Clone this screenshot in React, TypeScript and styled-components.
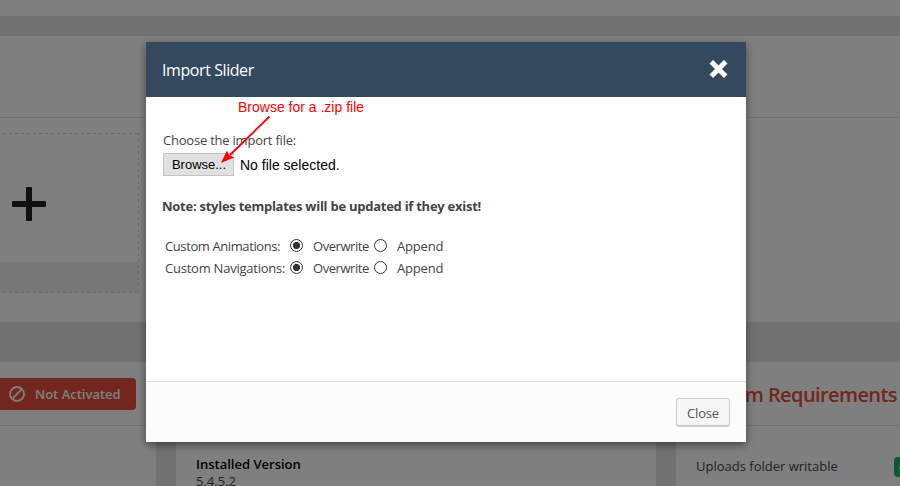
import React from "react";
import styled, { createGlobalStyle } from "styled-components";

const Global = createGlobalStyle`
  * { box-sizing: border-box; }
  html, body { margin: 0; padding: 0; overflow: hidden; }
  body { font-family: "Open Sans", sans-serif; font-size: 13px; color: #444; background: #e2e2e2; }
`;

const Page = styled.div`
  position: relative;
  width: 900px;
  height: 486px;
  overflow: hidden;
  display: flex;
  flex-direction: column;
  background: #e2e2e2;
`;

const TopStrip = styled.div`
  flex: none;
  height: 16px;
  margin-bottom: 20px;
  background: #fff;
`;

const SlidersPanel = styled.section`
  flex: none;
  height: 286px;
  margin-bottom: 40px;
  background: #fff;
`;

const SlidersHead = styled.div`
  height: 82px;
  border-bottom: 1px solid #e2e2e2;
`;

const NewSlider = styled.div`
  display: flex;
  flex-direction: column;
  width: 220px;
  height: 160px;
  margin: 15px 0 0 -81px;
  padding: 1px;
  background:
    repeating-linear-gradient(90deg, #d4d4d4 0 3px, transparent 3px 6px) 0 0 / 100% 1px no-repeat,
    repeating-linear-gradient(90deg, #d4d4d4 0 3px, transparent 3px 6px) 0 100% / 100% 1px no-repeat,
    repeating-linear-gradient(180deg, #d4d4d4 0 3px, transparent 3px 6px) 100% 0 / 1px 100% no-repeat;
`;

const NewSliderIcon = styled.div`
  flex: 1;
  padding: 53px 0 0 92px;
  svg { display: block; }
`;

const NewSliderFoot = styled.div`
  height: 30px;
  background: #eee;
`;

const Columns = styled.div`
  flex: 1;
  display: grid;
  grid-template-columns: 156px 480px 224px;
  column-gap: 20px;
`;

const Column = styled.section`
  background: #fff;
  min-width: 0;
`;

const ColumnHead = styled.div<{ $inset?: number }>`
  height: 64px;
  padding-left: ${(p) => p.$inset ?? 0}px;
  border-bottom: 1px solid #e2e2e2;
  display: flex;
  align-items: center;
  overflow: hidden;
`;

const Heading = styled.h2`
  margin: 2px 0 0;
  font-size: 20px;
  line-height: 28px;
  font-weight: 600;
  letter-spacing: -0.6px;
  color: #e74c3c;
  white-space: nowrap;
`;

const StatusBadge = styled.div`
  display: flex;
  align-items: center;
  gap: 10px;
  width: 136px;
  height: 32px;
  padding-left: 9px;
  border-radius: 0 4px 4px 0;
  background: #e74c3c;
  color: #fff;
  font-weight: 600;
  white-space: nowrap;
`;

const VersionInfo = styled.div`
  padding: 29px 0 0 20px;
  line-height: 17px;
`;

const VersionLabel = styled.div`
  font-weight: 600;
  line-height: 18px;
  color: #000;
`;

const Requirement = styled.div`
  display: flex;
  justify-content: space-between;
  align-items: flex-start;
  height: 20px;
  margin: 31px 0 0 20px;
  line-height: 18px;
`;

const OkMark = styled.span`
  display: flex;
  align-items: center;
  width: 6px;
  height: 20px;
  padding-left: 5px;
  border-radius: 4px 0 0 4px;
  background: #27ae60;
  overflow: hidden;
  svg { flex: none; }
`;

const Overlay = styled.div`
  position: absolute;
  inset: 0;
  display: flex;
  justify-content: center;
  align-items: flex-start;
  padding: 42px 8px 0 0;
  background: rgba(0, 0, 0, 0.5);
`;

const Dialog = styled.div`
  position: relative;
  display: flex;
  flex-direction: column;
  width: 600px;
  height: 400px;
  background: #fff;
  box-shadow: 0 3px 8px rgba(0, 0, 0, 0.45);
`;

const DialogHeader = styled.header`
  display: flex;
  justify-content: space-between;
  align-items: center;
  height: 55px;
  padding: 0 18px 0 16px;
  background: #34495e;
  color: #fff;
  font-size: 16px;
`;

const Title = styled.span`
  line-height: 22px;
  letter-spacing: -0.42px;
`;

const CloseIcon = styled.button`
  padding: 0;
  margin-top: -1px;
  border: 0;
  background: none;
  svg { display: block; }
`;

const DialogBody = styled.div`
  flex: 1;
  padding: 33px 16px 0;
`;

const FieldLabel = styled.div`
  padding-left: 1px;
  height: 23px;
  line-height: 20px;
  letter-spacing: -0.22px;
`;

const FilePicker = styled.div`
  display: flex;
  align-items: center;
  gap: 6px;
  height: 23px;
  padding-left: 1px;
  font: 14px/16px "Liberation Sans", sans-serif;
  color: #000;
`;

const BrowseButton = styled.button`
  width: 71px;
  height: 23px;
  padding: 0 0 0 1px;
  border: 1px solid #c3c3c3;
  background: #e1e1e1;
  color: #000;
  font: 13px/16px "Liberation Sans", sans-serif;
`;

const Note = styled.div`
  margin: 20px 0 19px;
  line-height: 20px;
  font-weight: 700;
  letter-spacing: -0.26px;
`;

const Option = styled.div`
  display: grid;
  grid-template-columns: 125px 23px 61px 23px auto;
  align-items: center;
  height: 22px;
  padding-left: 3px;
  line-height: 20px;
  white-space: nowrap;
`;

const OptionText = styled.span<{ $tracking: number }>`
  letter-spacing: ${(p) => p.$tracking}px;
`;

const Radio = styled.span<{ $checked?: boolean }>`
  width: 13px;
  height: 13px;
  margin-top: -2px;
  border: 1px solid #333;
  border-radius: 50%;
  background: ${(p) => (p.$checked ? "radial-gradient(circle, #333 3.2px, #fff 4px)" : "#fff")};
`;

const DialogFooter = styled.footer`
  display: flex;
  justify-content: flex-end;
  height: 61px;
  padding: 16px 16px 0;
  border-top: 1px solid #ddd;
  background: #fcfcfc;
`;

const CloseButton = styled.button`
  width: 54px;
  height: 29px;
  padding: 1px 0 0;
  border: 1px solid #ccc;
  border-bottom-width: 2px;
  border-radius: 3px;
  background: #f7f7f7;
  color: #555;
  font: 13px/18px "Open Sans", sans-serif;
  letter-spacing: -0.2px;
`;

const Callout = styled.div`
  position: absolute;
  left: 92px;
  top: 57px;
  color: #f00;
  font: 14px/16px "Liberation Sans", sans-serif;
  white-space: nowrap;
`;

const Arrow = styled.svg`
  position: absolute;
  left: 70px;
  top: 70px;
`;

const choices = [
  { label: "Custom Animations:", tracking: -0.4 },
  { label: "Custom Navigations:", tracking: -0.23 },
];

export default function App() {
  return (
    <>
      <Global />
      <Page>
        <TopStrip />
        <SlidersPanel>
          <SlidersHead />
          <NewSlider>
            <NewSliderIcon>
              <svg width="34" height="34" viewBox="0 0 34 34" fill="#222">
                <rect x="0" y="14" width="34" height="6" rx="1" />
                <rect x="14" y="0" width="6" height="34" rx="1" />
              </svg>
            </NewSliderIcon>
            <NewSliderFoot />
          </NewSlider>
        </SlidersPanel>
        <Columns>
          <Column>
            <ColumnHead>
              <StatusBadge>
                <svg width="16" height="16" viewBox="0 0 16 16" fill="none" stroke="#fff" strokeWidth="1.8">
                  <circle cx="8" cy="8" r="7" />
                  <path d="M3.2 12.8 12.8 3.2" />
                </svg>
                Not Activated
              </StatusBadge>
            </ColumnHead>
          </Column>
          <Column>
            <ColumnHead />
            <VersionInfo>
              <VersionLabel>Installed Version</VersionLabel>
              5.4.5.2
            </VersionInfo>
          </Column>
          <Column>
            <ColumnHead $inset={21}>
              <Heading>System Requirements</Heading>
            </ColumnHead>
            <Requirement>
              Uploads folder writable
              <OkMark>
                <svg width="10" height="10" viewBox="0 0 10 10" fill="none" stroke="#fff" strokeWidth="2">
                  <path d="M0 5l3 3 6-7" />
                </svg>
              </OkMark>
            </Requirement>
          </Column>
        </Columns>
        <Overlay>
          <Dialog>
            <DialogHeader>
              <Title>Import Slider</Title>
              <CloseIcon aria-label="Close dialog">
                <svg width="19" height="18" viewBox="0 0 19 18" stroke="#fff" strokeWidth="5">
                  <path d="M2.3 1.8l14.4 14.4M16.7 1.8L2.3 16.2" />
                </svg>
              </CloseIcon>
            </DialogHeader>
            <DialogBody>
              <FieldLabel>Choose the import file:</FieldLabel>
              <FilePicker>
                <BrowseButton>Browse...</BrowseButton>
                No file selected.
              </FilePicker>
              <Note>Note: styles templates will be updated if they exist!</Note>
              {choices.map(({ label, tracking }) => (
                <Option key={label}>
                  <OptionText $tracking={tracking}>{label}</OptionText>
                  <Radio $checked />
                  <OptionText $tracking={-0.45}>Overwrite</OptionText>
                  <Radio />
                  <OptionText $tracking={-0.2}>Append</OptionText>
                </Option>
              ))}
            </DialogBody>
            <DialogFooter>
              <CloseButton>Close</CloseButton>
            </DialogFooter>
            <Callout>Browse for a .zip file</Callout>
            <Arrow width="60" height="56" viewBox="0 0 60 56">
              <path d="M53.5 4.5 L14 43" stroke="#f00" strokeWidth="1.8" />
              <path d="M5 51 L11 38.500 L13 43 L18 45.500 Z" fill="#f00" />
            </Arrow>
          </Dialog>
        </Overlay>
      </Page>
    </>
  );
}
